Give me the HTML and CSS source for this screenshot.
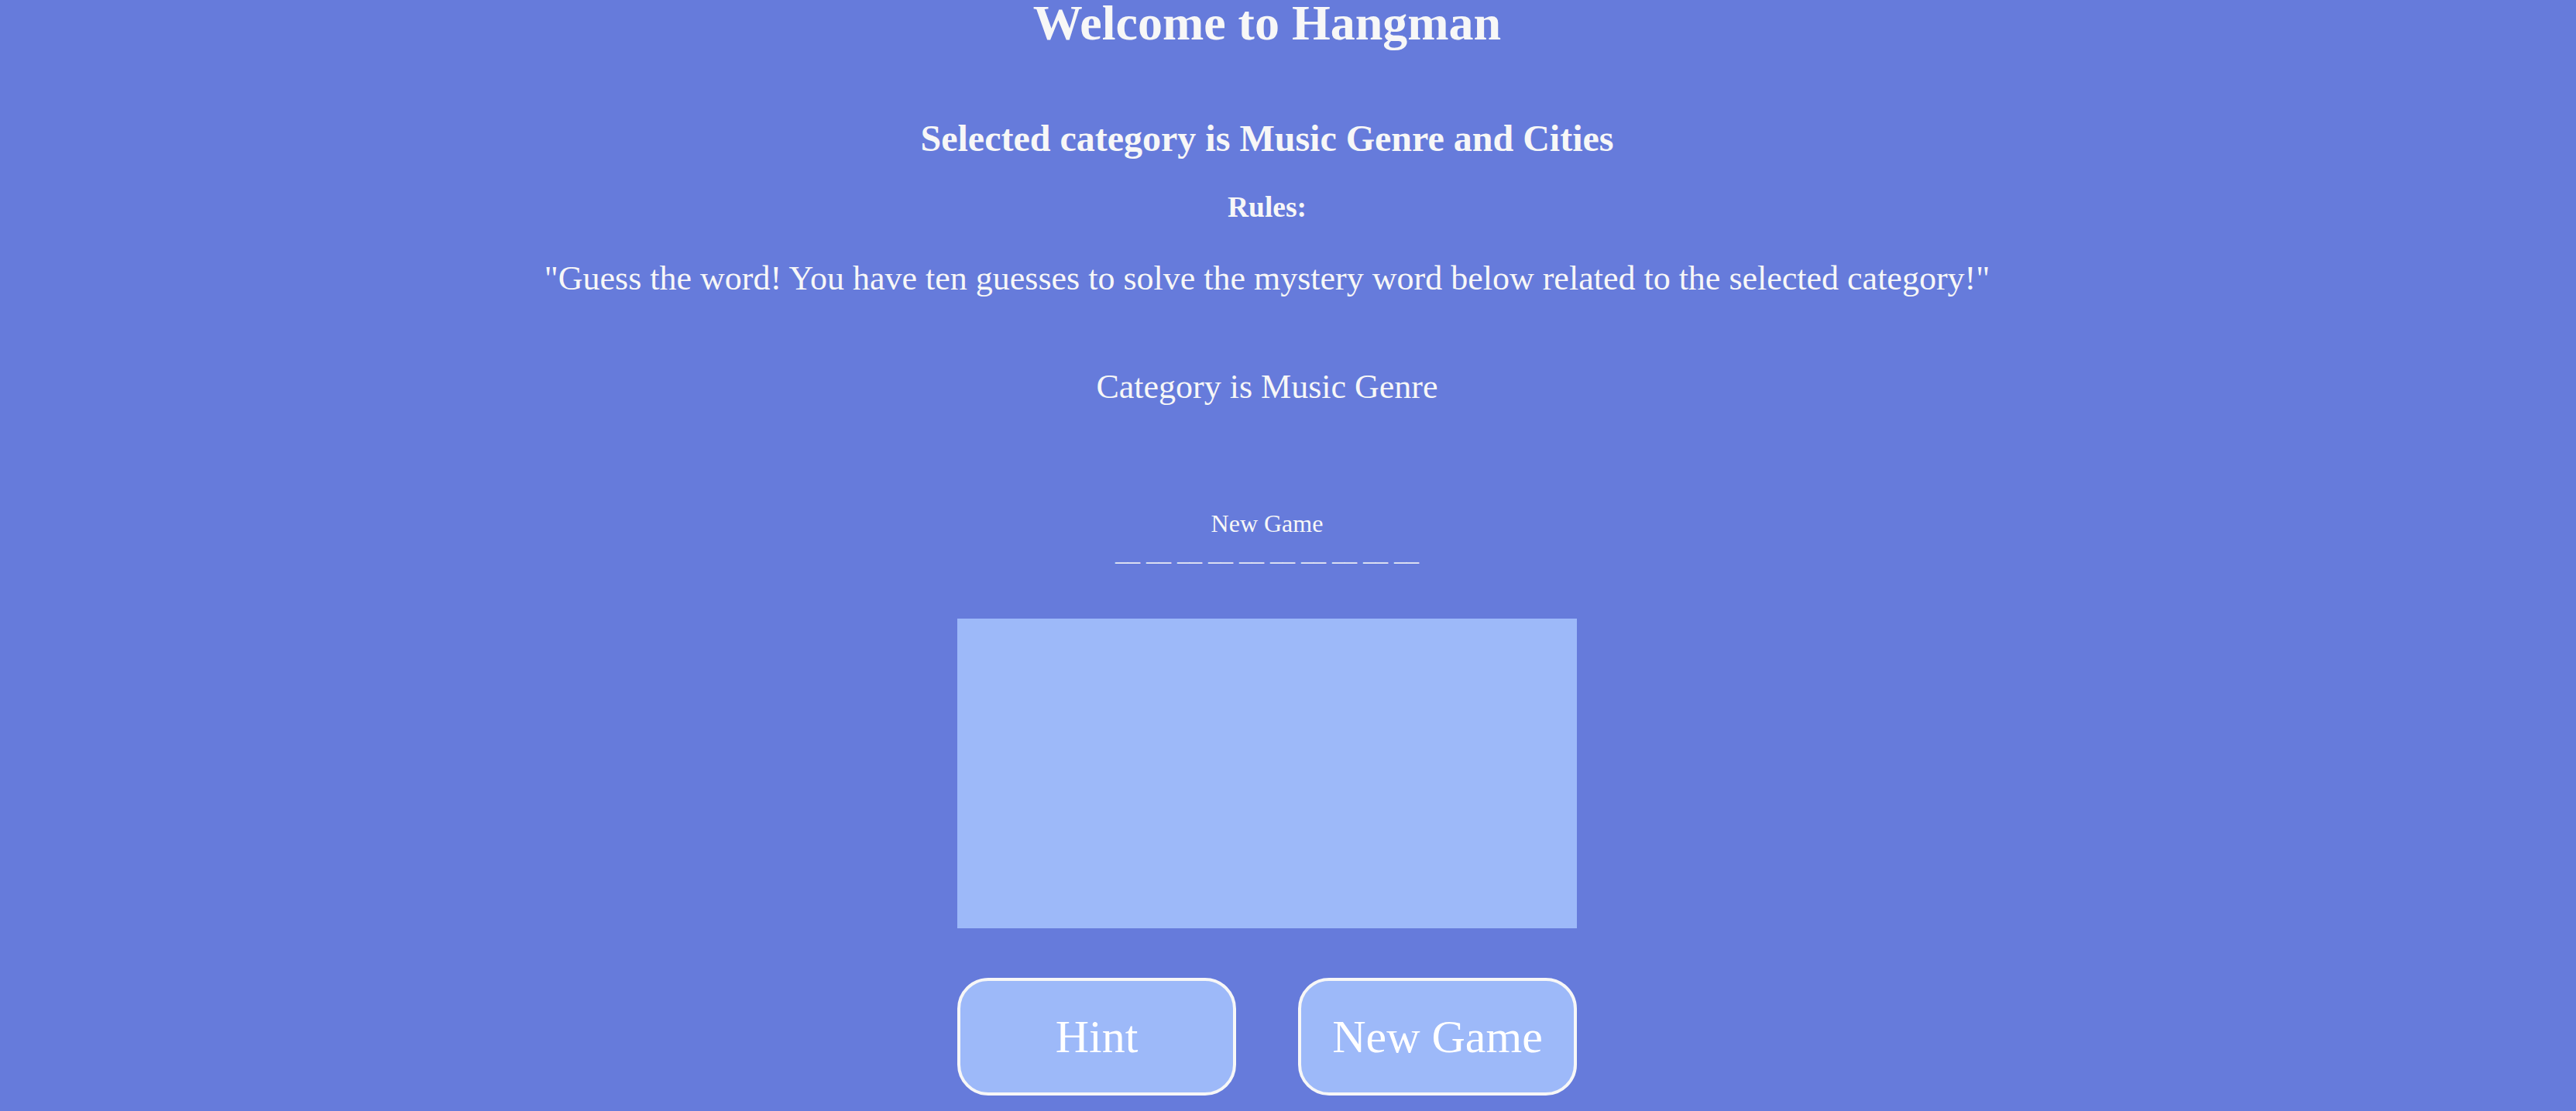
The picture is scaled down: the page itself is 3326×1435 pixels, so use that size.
FILE: index.html
```html
<!DOCTYPE html>
<html lang="en">
<head>
<meta charset="utf-8">
<title>Hangman</title>
<link rel="stylesheet" href="styles.css">
</head>
<body>
<main class="page">
  <h1 class="title">Welcome to Hangman</h1>
  <h2 class="subtitle">Selected category is Music Genre and Cities</h2>
  <h3 class="rules-label">Rules:</h3>
  <p class="rules-text">"Guess the word! You have ten guesses to solve the mystery word below related to the selected category!"</p>
  <p class="category">Category is Music Genre</p>
  <div class="status">New Game</div>
  <div class="word">__ __ __ __ __ __ __ __ __ __</div>
  <div class="board"></div>
  <div class="controls">
    <button class="btn" type="button">Hint</button>
    <button class="btn" type="button">New Game</button>
  </div>
</main>
</body>
</html>
```

FILE: styles.css
```css
html {
  background: #667bdb;
  overflow: hidden;
}

body {
  margin: 0;
  padding: 2px 54px 0 0;
  font-family: "Liberation Serif", "Times New Roman", serif;
  color: #f7f7f7;
}

.page {
  display: flex;
  flex-direction: column;
  align-items: center;
  text-align: center;
}

.title {
  margin: 0;
  font-size: 64px;
  line-height: 56px;
  font-weight: bold;
}

.subtitle {
  margin: 97px 0 0;
  font-size: 48px;
  line-height: 48px;
  font-weight: bold;
}

.rules-label {
  margin: 46px 0 0;
  font-size: 37.44px;
  line-height: 38px;
  font-weight: bold;
}

.rules-text {
  margin: 51px 0 0;
  font-size: 44px;
  line-height: 44px;
}

.category {
  margin: 96px 0 0;
  font-size: 44px;
  line-height: 44px;
}

.status {
  margin: 136px 0 0;
  font-size: 32px;
  line-height: 37px;
}

.word {
  font-size: 32px;
  line-height: 37px;
  white-space: pre;
}

.board {
  margin-top: 67px;
  width: 800px;
  height: 400px;
  background: #9db9f9;
}

.controls {
  margin-top: 64px;
  display: flex;
  gap: 80px;
}

.btn {
  box-sizing: border-box;
  width: 360px;
  height: 152px;
  border: 4px solid #f7f7f7;
  border-radius: 40px;
  background: #9db9f9;
  color: #ffffff;
  font-family: "Liberation Serif", "Times New Roman", serif;
  font-size: 60px;
  line-height: 60px;
  padding: 0;
  display: flex;
  align-items: center;
  justify-content: center;
}
```
